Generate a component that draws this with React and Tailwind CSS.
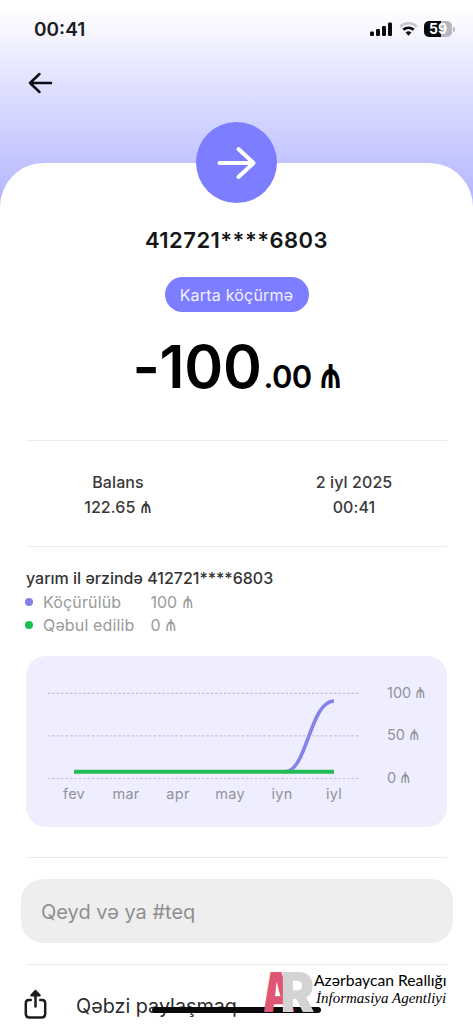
import React from 'react'

const stats = [
  { label: 'Köçürülüb', value: '100', dot: 'bg-[#8280e8]' },
  { label: 'Qəbul edilib', value: '0', dot: 'bg-[#17bf52]' },
]

const months = ['fev', 'mar', 'apr', 'may', 'iyn', 'iyl']
const levels = ['100', '50', '0']

// Inter's manat sign is only x-height tall, so stretch it up from the baseline
const Money = ({ children }) => (
  <span className="whitespace-nowrap">
    {children} <span className="inline-block origin-[50%_86%] scale-x-95 scale-y-[1.38] leading-none">₼</span>
  </span>
)

const StatusBar = () => (
  <div className="flex h-[58px] items-center justify-between pl-[34px] pr-[18px]">
    <span className="pt-0.5 text-[19px] font-semibold text-[#1c1c22]">00:41</span>
    <div className="flex items-center">
      <svg width="23" height="16" viewBox="0 0 23 16" fill="#0a0a0c">
        <rect x="0" y="10.5" width="4" height="4.5" rx="1.2" />
        <rect x="6" y="8" width="4" height="7" rx="1.2" />
        <rect x="12" y="5" width="4" height="10" rx="1.2" />
        <rect x="18" y="1.5" width="4" height="13.5" rx="1.2" />
      </svg>
      <svg className="ml-1.5" width="19" height="16" viewBox="0 0 19 16" fill="none">
        <path d="M1.2 5.6a12 12 0 0 1 16.6 0" stroke="#c6c6cf" strokeWidth="2.6" />
        <path d="M4.3 8.8a7.6 7.6 0 0 1 10.4 0" stroke="#0a0a0c" strokeWidth="2.6" />
        <path d="M6.6 11.6a4.3 4.3 0 0 1 5.8 0L9.5 14.8z" fill="#0a0a0c" />
      </svg>
      <div className="ml-1.5 flex h-4 w-7 items-center justify-center rounded-[5px] bg-linear-to-r from-[#0a0a0c] from-59% to-[#b5b5bf] to-59%">
        <span className="text-[14px] font-bold leading-none text-white">59</span>
      </div>
      <span className="ml-px h-[5px] w-0.5 rounded-r-full bg-[#b5b5bf]"></span>
    </div>
  </div>
)

const Chart = () => (
  <div className="flex h-[171px] rounded-[20px] bg-[#eeeeff] text-[14.5px] text-[#92929c]">
    <svg width="340" height="171" viewBox="0 0 340 171" fill="none">
      {levels.map((level, i) => (
        <path key={level} d={`M22 ${37.3 + i * 42.6}H333`} stroke="#c3c3cf" strokeWidth="1.2" strokeDasharray="2.4 2" />
      ))}
      <path d="M256 115.8H259C281 115.8 284 45 308 45" stroke="#8582eb" strokeWidth="3.6" />
      <path d="M48 115.8H308" stroke="#22bb58" strokeWidth="4" />
      {months.map((month, i) => (
        <text key={month} x={48 + i * 52} y="142.6" textAnchor="middle" fill="#92929c" letterSpacing="0.3">{month}</text>
      ))}
    </svg>
    <div className="flex flex-col pl-[21px] pt-[15.5px] leading-[42.6px]">
      {levels.map((level) => (
        <Money key={level}>{level}</Money>
      ))}
    </div>
  </div>
)

const Watermark = () => (
  <div className="absolute left-[262px] top-[968px] flex">
    <svg className="overflow-visible" width="52" height="48" viewBox="0 0 52 48">
      <g fontFamily="Inter" fontWeight="900" fontSize="55">
        <text transform="translate(1 44) skewX(4)" textLength="32" lengthAdjust="spacingAndGlyphs" fill="#df5674">A</text>
        <text x="18.5" y="44" textLength="34" lengthAdjust="spacingAndGlyphs" fill="#d3d3d3">R</text>
      </g>
    </svg>
    <div className="flex flex-col pt-[3px] text-black">
      <span className="whitespace-nowrap font-['Lato',sans-serif] text-[15.7px] leading-[19px]">Azərbaycan Reallığı</span>
      <span className="whitespace-nowrap pl-0.5 font-['Liberation_Serif',serif] text-[15px] italic leading-4">İnformasiya Agentliyi</span>
    </div>
  </div>
)

const App = () => {
  return (
    <div className="relative h-[1024px] w-[473px] overflow-hidden bg-linear-to-b from-white from-[8px] via-[#dbdcff] via-[98px] to-[#b3b4ff] to-[205px] font-['Inter',sans-serif]">
      <StatusBar />

      <div className="flex h-[105px] pl-7 pt-[14px]">
        <svg width="25" height="22" viewBox="0 0 25 22" fill="none" stroke="#0c0c12" strokeWidth="2.5" strokeLinecap="round" strokeLinejoin="round">
          <path d="M11.5 2L2 11L11.5 20M2 11H23" />
        </svg>
      </div>

      <main className="flex h-[861px] flex-col rounded-t-[44px] bg-white px-[26px]">
        {/* Transfer summary */}
        <section className="flex h-[277px] flex-col items-center">
          <div className="-mt-[41px] flex size-[81px] shrink-0 items-center justify-center rounded-full bg-[#7d7eff]">
            <svg width="39" height="34" viewBox="0 0 39 34" fill="none" stroke="#fff" strokeWidth="4" strokeLinecap="round" strokeLinejoin="round">
              <path d="M2.5 17H36M21.5 3L36.5 17L21.5 31" />
            </svg>
          </div>
          <h1 className="mt-[23px] whitespace-nowrap text-[22px] font-semibold leading-7 tracking-[0.45px] text-[#161616]">412721****6803</h1>
          <span className="mt-[23px] flex h-[35px] w-[144px] items-center justify-center rounded-full bg-[#7d7eff] text-base tracking-[0.2px] text-[#f1f0ff]">Karta köçürmə</span>
          <div className="mt-5 flex items-baseline whitespace-nowrap pl-px text-black">
            <span className="text-[59px] font-semibold leading-[70px] tracking-[-0.3px]">-100</span>
            <span className="ml-0.5 text-[31px] font-semibold tracking-[-0.6px]"><Money>.00</Money></span>
          </div>
        </section>

        {/* Balance and date */}
        <section className="flex h-[107px] justify-between border-y border-[#ebebeb] pt-[29px] text-center text-base leading-[24.5px] font-medium tracking-[0.1px] text-[#3a3a3a]">
          <div className="w-[184px]">
            <p>Balans</p>
            <p><Money>122.65</Money></p>
          </div>
          <div className="w-[186px]">
            <p>2 iyl 2025</p>
            <p>00:41</p>
          </div>
        </section>

        {/* Half year statistics */}
        <section className="flex h-[311px] flex-col border-b border-[#ebebeb] pt-[19px] text-base">
          <h2 className="whitespace-nowrap font-medium leading-6 text-[#333]">yarım il ərzində 412721****6803</h2>
          {stats.map((item) => (
            <div key={item.label} className="flex h-[23px] items-center leading-5 text-[#9a9a9a]">
              <span className={`-ml-px size-2 rounded-full ${item.dot}`}></span>
              <span className="ml-2.5 w-[107.5px] tracking-[0.15px]">{item.label}</span>
              <Money>{item.value}</Money>
            </div>
          ))}
          <div className="mt-5">
            <Chart />
          </div>
        </section>

        {/* Note field */}
        <section className="h-[107px] border-b border-[#ebebeb] pt-[21px]">
          <div className="-ml-[5px] flex h-16 w-[432px] items-center rounded-[22px] bg-[#eee] pl-5 pt-0.5">
            <span className="text-[20px] text-[#8e8e8e]">Qeyd və ya #teq</span>
          </div>
        </section>

        <div className="flex items-center pt-[22px]">
          <svg className="-ml-0.5" width="23" height="30" viewBox="0 0 22 30" fill="none" stroke="#1d1d1d" strokeWidth="2.5" strokeLinecap="round" strokeLinejoin="round">
            <path d="M6.3 11H4.5Q1.3 11 1.3 14.2V25Q1.3 28.4 4.7 28.4H17.3Q20.7 28.4 20.7 25V14.2Q20.7 11 17.5 11H15.7" />
            <path d="M11 17.5V3M7 6.3L11 2.2L15 6.3z" />
          </svg>
          <span className="ml-[29px] pt-[5px] text-[19.8px] text-[#2b2b2b]">Qəbzi paylaşmaq</span>
        </div>
      </main>

      {/* Home indicator */}
      <div className="absolute left-[152px] top-[1007px] h-[6px] w-[169px] rounded-full bg-[#0b0b0b]"></div>
      <Watermark />
    </div>
  )
}

export default App
